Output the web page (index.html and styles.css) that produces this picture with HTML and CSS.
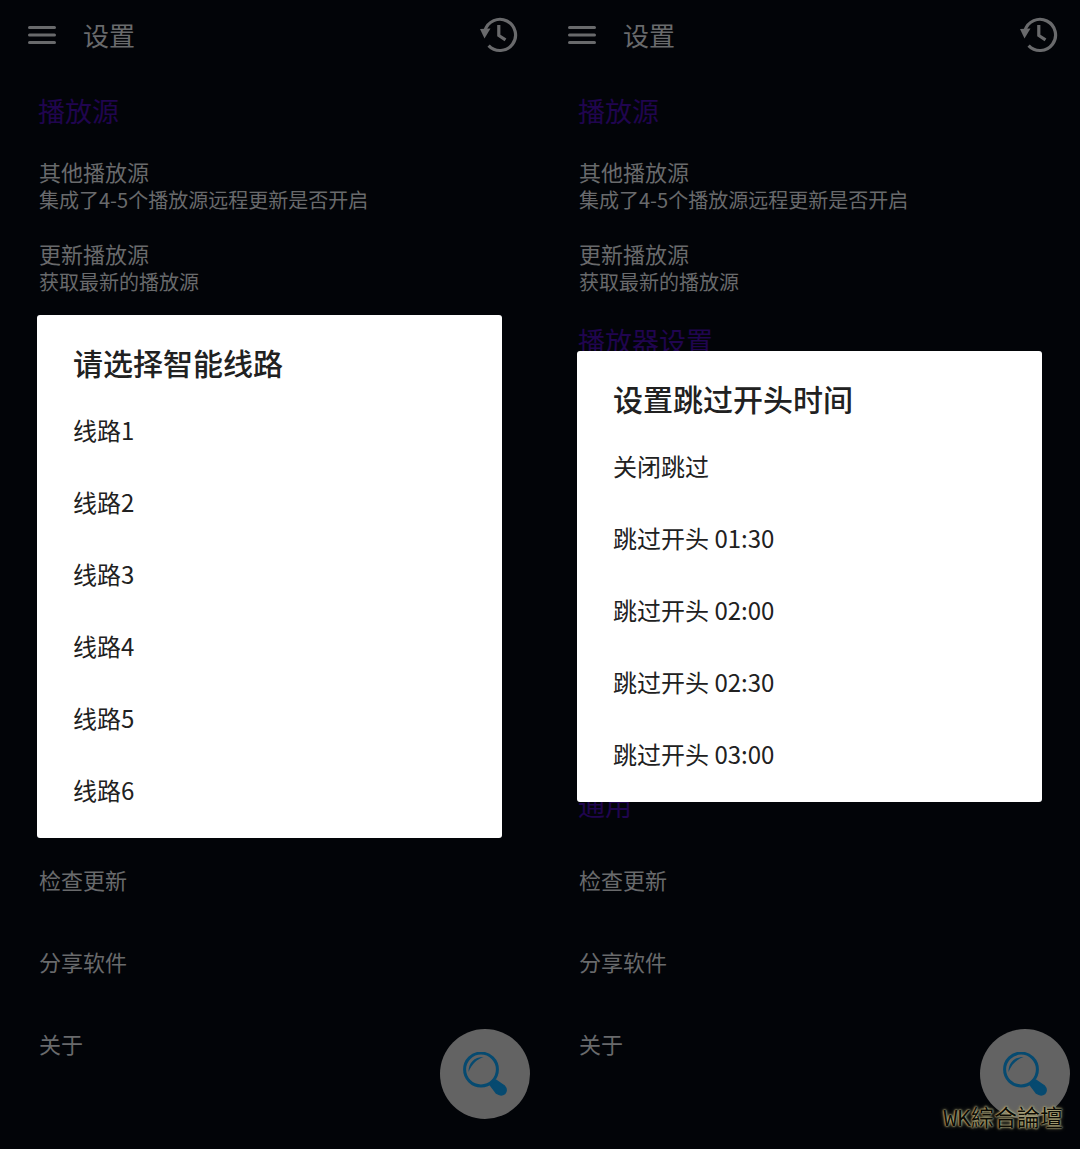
FILE: index.html
```
<!DOCTYPE html>
<html lang="zh-CN">

	<head>

		<meta charset="utf-8">

		<title>设置</title>

		<link rel="stylesheet" href="styles.css">

	</head>

	<body>

		<!-- shared icons -->
		<svg class="sprite" aria-hidden="true">
			<symbol id="icon-menu" viewBox="0 0 28 20">
				<path d="M1.5 2.500h25M1.5 10h25M1.5 17.500h25" fill="none" stroke="currentColor" stroke-width="3" stroke-linecap="round" />
			</symbol>
			<symbol id="icon-history" viewBox="0 0 38 36">
				<path d="M5 13.5A15.6 15.6 0 1 1 8.600 28.6" fill="none" stroke="currentColor" stroke-width="3.200" />
				<path d="M0 12L10.500 11.5L4.500 21.500Z" fill="currentColor" />
				<path d="M18.800 8V18.5L25.500 22.8" fill="none" stroke="currentColor" stroke-width="3.200" />
			</symbol>
			<symbol id="icon-search" viewBox="0 0 44 44">
				<circle cx="18" cy="17.500" r="16.4" fill="none" stroke="currentColor" stroke-width="3" />
				<path d="M5.500 20C5.500 11 11 5 20.500 5C14 7.500 9 11.500 5.500 20Z" fill="currentColor" />
				<path d="M27.500 33L33 28.500L41 34Q44.500 38 41.500 41.500Q38 44 33.500 41Z" fill="currentColor" stroke="currentColor" stroke-width="2" stroke-linejoin="round" />
			</symbol>
		</svg>

		<main class="screens">

			<div class="screen">

				<header class="topbar">
					<button class="icon-button" aria-label="菜单"><svg class="menu-icon"><use href="#icon-menu" /></svg></button>
					<h1>设置</h1>
					<button class="icon-button" aria-label="历史"><svg class="history-icon"><use href="#icon-history" /></svg></button>
				</header>

				<div class="settings">
					<section>
						<h2>播放源</h2>
						<button class="row">
							<span class="name">其他播放源</span>
							<span class="note">集成了4-5个播放源远程更新是否开启</span>
						</button>
						<button class="row">
							<span class="name">更新播放源</span>
							<span class="note">获取最新的播放源</span>
						</button>
					</section>
					<section class="player"></section>
					<section class="general">
						<button class="row"><span class="name">检查更新</span></button>
						<button class="row"><span class="name">分享软件</span></button>
						<button class="row"><span class="name">关于</span></button>
					</section>
				</div>

				<button class="fab" aria-label="搜索"><svg><use href="#icon-search" /></svg></button>

				<div class="overlay">
					<div class="dialog" role="dialog" aria-labelledby="route-title">
						<h2 id="route-title">请选择智能线路</h2>
						<button class="option">线路1</button>
						<button class="option">线路2</button>
						<button class="option">线路3</button>
						<button class="option">线路4</button>
						<button class="option">线路5</button>
						<button class="option">线路6</button>
					</div>
				</div>

			</div>

			<div class="screen">

				<header class="topbar">
					<button class="icon-button" aria-label="菜单"><svg class="menu-icon"><use href="#icon-menu" /></svg></button>
					<h1>设置</h1>
					<button class="icon-button" aria-label="历史"><svg class="history-icon"><use href="#icon-history" /></svg></button>
				</header>

				<div class="settings">
					<section>
						<h2>播放源</h2>
						<button class="row">
							<span class="name">其他播放源</span>
							<span class="note">集成了4-5个播放源远程更新是否开启</span>
						</button>
						<button class="row">
							<span class="name">更新播放源</span>
							<span class="note">获取最新的播放源</span>
						</button>
					</section>
					<section class="player">
						<h2>播放器设置</h2>
					</section>
					<section class="general">
						<h2>通用</h2>
						<button class="row"><span class="name">检查更新</span></button>
						<button class="row"><span class="name">分享软件</span></button>
						<button class="row"><span class="name">关于</span></button>
					</section>
				</div>

				<button class="fab" aria-label="搜索"><svg><use href="#icon-search" /></svg></button>

				<div class="overlay">
					<div class="dialog" role="dialog" aria-labelledby="skip-title">
						<h2 id="skip-title">设置跳过开头时间</h2>
						<button class="option">关闭跳过</button>
						<button class="option">跳过开头 01:30</button>
						<button class="option">跳过开头 02:00</button>
						<button class="option">跳过开头 02:30</button>
						<button class="option">跳过开头 03:00</button>
					</div>
				</div>

				<p class="watermark" lang="zh-TW">WK綜合論壇</p>

			</div>

		</main>

	</body>

</html>
```
FILE: styles.css
```
* {
	box-sizing: border-box;
}

body {
	margin: 0;
	background: #020408;
	color: #696a6c;
	font-family: "Noto Sans CJK SC", sans-serif;
}

h1, h2, p {
	margin: 0;
	font-weight: 400;
}

button {
	padding: 0;
	border: 0;
	background: none;
	color: inherit;
	font: inherit;
	text-align: left;
	cursor: pointer;
}

svg {
	display: block;
}

.sprite {
	position: absolute;
	width: 0;
	height: 0;
}

.screens {
	display: grid;
	grid-template-columns: 1fr 1fr;
	min-height: 100vh;
}

.screen {
	position: relative;
}

/* top bar */

.topbar {
	display: flex;
	align-items: center;
	gap: 27px;
	height: 72px;
	padding: 0 22px 2px 28px;
}

.topbar h1 {
	flex: 1;
	font-size: 26px;
	line-height: 36px;
}

.menu-icon {
	width: 28px;
	height: 20px;
}

.history-icon {
	width: 38px;
	height: 36px;
}

/* settings list */

.settings {
	padding: 7px 38px 0;
}

.settings h2 {
	height: 66px;
	color: #20054f;
	font-size: 27px;
	line-height: 64px;
}

.row {
	display: flex;
	flex-direction: column;
	justify-content: center;
	width: 100%;
	height: 82px;
	padding: 0 0 2px 1px;
}

.name {
	font-size: 22px;
	line-height: 30px;
}

.note {
	font-size: 20px;
	line-height: 28px;
}

.player {
	height: 464px;
}

.general {
	display: flex;
	flex-direction: column;
	justify-content: flex-end;
	min-height: 312px;
}

.fab {
	position: absolute;
	right: 10px;
	bottom: 30px;
	display: flex;
	align-items: center;
	justify-content: center;
	width: 90px;
	height: 90px;
	border-radius: 50%;
	background: #636363;
	color: #064a70;
}

.fab svg {
	width: 44px;
	height: 44px;
}

/* dialogs */

.overlay {
	position: absolute;
	inset: 0;
	display: flex;
	align-items: center;
	padding: 4px 38px 0 37px;
}

.dialog {
	width: 100%;
	padding-bottom: 11px;
	border-radius: 3px;
	background: #fff;
	color: #212121;
}

.dialog h2 {
	height: 80px;
	padding: 0 36px;
	font-size: 30px;
	font-weight: 500;
	line-height: 94px;
}

.option {
	display: block;
	width: 100%;
	height: 72px;
	padding: 0 36px 4px;
	font-size: 24px;
}

.watermark {
	position: absolute;
	right: 17px;
	bottom: 13px;
	color: #0c0b04;
	font-family: "Liberation Mono", "Noto Sans CJK TC", monospace;
	font-size: 23px;
	line-height: 32px;
	text-shadow: 0 0 2px #c9c18c, 0 0 2px #c9c18c, 0 0 4px #8c855c;
}
```
